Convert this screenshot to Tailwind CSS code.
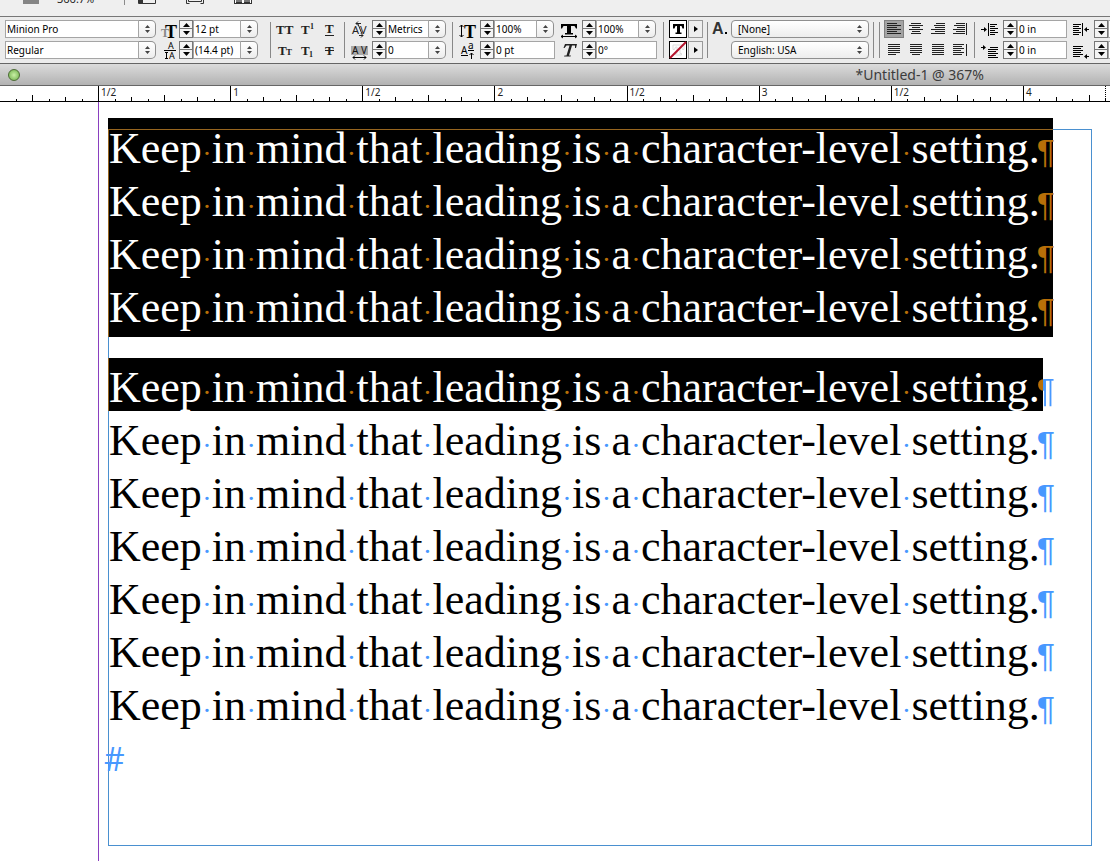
<!DOCTYPE html>
<html lang="en">
<head>
    <meta charset="UTF-8">
    <title>Untitled-1</title>
    <script src="https://cdn.jsdelivr.net/npm/@tailwindcss/browser@4"></script>
</head>
<body class="bg-white text-black font-['Noto_Sans',sans-serif] overflow-x-hidden">

    <!-- Shared glyphs -->
    <svg class="hidden">
        <symbol id="up" viewBox="0 0 7 4"><path d="M0 4L3.5 0L7 4z"/></symbol>
        <symbol id="down" viewBox="0 0 7 4"><path d="M0 0L3.5 4L7 0z"/></symbol>
        <symbol id="updown" viewBox="0 0 5 8"><path d="M0 3L2.5 0L5 3zM0 5L2.5 8L5 5z"/></symbol>
    </svg>

    <div class="flex flex-col min-h-screen">

        <!-- Application bar -->
        <header class="h-4 shrink-0 bg-[#efefef] flex items-start overflow-hidden">
            <span class="ml-[23px] w-4 h-[4px] bg-[#858585]"></span>
            <span class="ml-[18px] w-[38px] h-[3px] flex items-end text-[11px] leading-[9px] text-[#222]">366.7%</span>
            <span class="ml-[29px] w-px h-[5px] bg-[#8a8a8a]"></span>
            <svg class="ml-[13px] w-[19px] h-[5px]" viewBox="0 0 19 5"><path d="M.5 0v3.5h17V0" fill="none" stroke="#333"/><path d="M1 0h4v4H1z" fill="#333"/></svg>
            <svg class="ml-[29px] w-[19px] h-[5px]" viewBox="0 0 19 5"><path d="M.5 0v3.5h3M14.5 3.5h3V0M2.500 0v1.500h13V0" fill="none" stroke="#333"/></svg>
            <svg class="ml-[29px] w-[19px] h-[5px]" viewBox="0 0 19 5"><path d="M0 0h18v4H0z" fill="#333"/><path d="M1 0h1v3H1zM16 0h1v3h-1zM8 0h2v3H8z" fill="#fff"/><path d="M2 0h6v2H2zM10 0h6v2h-6z" fill="#777"/></svg>
        </header>

        <!-- Character controls -->
        <section class="h-[47px] shrink-0 border-t border-[#777] bg-[#ececec] pt-[3px] flex items-start overflow-hidden text-[10px] [&>*]:shrink-0 [&_svg]:overflow-visible">
            <div class="ml-[5px] w-[151px] grid gap-[3px]">
                <div class="flex h-[18px]">
                    <input aria-label="Font" value="Minion Pro" class="w-[134px] h-[18px] px-px bg-white border border-[#a5a5a5]">
                    <button data-drop aria-label="Font list"></button>
                </div>
                <div class="flex h-[18px]">
                    <input aria-label="Style" value="Regular" class="w-[134px] h-[18px] px-px bg-white border border-[#a5a5a5]">
                    <button data-drop aria-label="Style list"></button>
                </div>
            </div>

            <div class="ml-[5px] w-[97px] grid gap-[3px]">
                <div class="flex h-[18px]">
                    <label for="size" class="w-[18px]"><svg class="w-[18px] h-[18px] font-['Liberation_Serif',serif] font-bold" viewBox="0 0 18 18"><text x="0" y="17" font-size="12" fill="#888">T</text><text x="4" y="18" font-size="18">T</text></svg></label>
                    <span data-spin></span>
                    <input id="size" value="12 pt" class="w-12 h-[18px] px-px bg-white border border-[#a5a5a5]">
                    <button data-drop aria-label="Size list"></button>
                </div>
                <div class="flex h-[18px]">
                    <label for="leading" class="w-[18px]"><svg class="w-[18px] h-[18px]" viewBox="0 0 18 18"><text x="7" y="8" font-size="9">A</text><path d="M3 9.500h12M5.500 11v6M4 11.500h3M4 17.500h3" stroke="#000" fill="none"/><text x="8" y="18" font-size="9">A</text></svg></label>
                    <span data-spin></span>
                    <input id="leading" value="(14.4 pt)" class="w-12 h-[18px] px-px bg-white border border-[#a5a5a5]">
                    <button data-drop aria-label="Leading list"></button>
                </div>
            </div>

            <span class="ml-3 mt-[2px] w-px h-9 bg-[#888]"></span>

            <div class="ml-[5px] w-[59px] grid grid-cols-[18px_23px_18px] gap-y-[3px] font-['Liberation_Serif',serif] font-bold text-[#222]">
                <button aria-label="All Caps" class="h-[18px]"><svg class="w-[18px] h-[18px]" viewBox="0 0 18 18"><text x="0" y="14" font-size="13" fill="#222">TT</text></svg></button>
                <button aria-label="Superscript" class="h-[18px] pl-[7px]"><svg class="w-[16px] h-[18px]" viewBox="0 0 16 18"><text x="0" y="14" font-size="13" fill="#222">T</text><text x="9" y="9" font-size="8" fill="#222">1</text></svg></button>
                <button aria-label="Underline" class="h-[18px] pl-[6px]"><svg class="w-[12px] h-[18px]" viewBox="0 0 12 18"><text x="2" y="13" font-size="13" fill="#222">T</text><path d="M2 15.500h9" stroke="#222"/></svg></button>
                <button aria-label="Small Caps" class="h-[18px]"><svg class="w-[18px] h-[18px]" viewBox="0 0 18 18"><text x="2" y="14" font-size="13" fill="#222">T</text><text x="10" y="14" font-size="9" fill="#222">T</text></svg></button>
                <button aria-label="Subscript" class="h-[18px] pl-[7px]"><svg class="w-[16px] h-[18px]" viewBox="0 0 16 18"><text x="0" y="14" font-size="13" fill="#222">T</text><text x="8" y="16" font-size="8" fill="#222">1</text></svg></button>
                <button aria-label="Strikethrough" class="h-[18px] pl-[6px]"><svg class="w-[12px] h-[18px]" viewBox="0 0 12 18"><text x="2" y="14" font-size="13" fill="#222">T</text><path d="M2 9.500h9" stroke="#222"/></svg></button>
            </div>

            <span class="ml-[9px] mt-[2px] w-px h-9 bg-[#888]"></span>

            <div class="ml-[7px] w-[94px] grid gap-[3px]">
                <div class="flex h-[18px]">
                    <label for="kerning" class="w-5"><svg class="w-[18px] h-[18px]" viewBox="0 0 18 18"><text x="0" y="14" font-size="11" fill="#222">A</text><text x="8" y="14" font-size="11" fill="#222">V</text><path d="M6 4l4 10M4 3.500h5M6 1.500l-2 2 2 2M7 15.500h4M9 13.500l2 2-2 2" fill="none" stroke="#222"/></svg></label>
                    <span data-spin></span>
                    <input id="kerning" value="Metrics" class="w-[43px] h-[18px] px-px bg-white border border-[#a5a5a5]">
                    <button data-drop aria-label="Kerning list"></button>
                </div>
                <div class="flex h-[18px]">
                    <label for="tracking" class="w-5"><svg class="w-[18px] h-[18px]" viewBox="0 0 18 18"><path d="M-1 5h17v9H-1z" fill="#aaa"/><text x="0" y="13" font-size="10" fill="#111">A</text><text x="9" y="13" font-size="10" fill="#111">V</text><path d="M1 16.500h13M3 14.500l-2 2 2 2M12 14.500l2 2-2 2" fill="none" stroke="#000"/></svg></label>
                    <span data-spin></span>
                    <input id="tracking" value="0" class="w-[43px] h-[18px] px-px bg-white border border-[#a5a5a5]">
                    <button data-drop aria-label="Tracking list"></button>
                </div>
            </div>

            <span class="ml-[6px] mt-[2px] w-px h-9 bg-[#888]"></span>

            <div class="ml-[7px] w-[95px] grid gap-[3px]">
                <div class="flex h-[18px]">
                    <label for="vscale" class="w-5"><svg class="w-[18px] h-[18px] font-['Liberation_Serif',serif] font-bold" viewBox="0 0 18 18"><path d="M1.500 5v12M-.5 7l2-2 2 2M-.5 15l2 2 2-2" fill="none" stroke="#000"/><text x="4" y="18" font-size="18">T</text></svg></label>
                    <span data-spin></span>
                    <input id="vscale" value="100%" class="w-[43px] h-[18px] px-px bg-white border border-[#a5a5a5]">
                    <button data-drop aria-label="Vertical scale list"></button>
                </div>
                <div class="flex h-[18px]">
                    <label for="baseline" class="w-5"><svg class="w-[18px] h-[18px]" viewBox="0 0 18 18"><text x="1" y="13" font-size="10">A</text><text x="8" y="8" font-size="10">a</text><path d="M1 14.500h7M8 9.500h6M11.500 18v-6M9.500 14l2-2 2 2" stroke="#000" fill="none"/></svg></label>
                    <span data-spin></span>
                    <input id="baseline" value="0 pt" class="w-[61px] h-[18px] px-px bg-white border border-[#a5a5a5]">
                </div>
            </div>

            <div class="ml-[6px] w-[96px] grid gap-[3px]">
                <div class="flex h-[18px]">
                    <label for="hscale" class="w-[21px]"><svg class="w-[18px] h-[18px]" viewBox="0 0 18 18"><path d="M0 4h16v4.500h-1L13.500 6H10v7h2v1.500H4V13h2V6H2.500L1 8.500H0z"/><path d="M0 16.500h16M2 15l-2 1.500 2 1.500M14 15l2 1.500-2 1.500" stroke="#000" fill="none"/></svg></label>
                    <span data-spin></span>
                    <input id="hscale" value="100%" class="w-[43px] h-[18px] px-px bg-white border border-[#a5a5a5]">
                    <button data-drop aria-label="Horizontal scale list"></button>
                </div>
                <div class="flex h-[18px]">
                    <label for="skew" class="w-[21px]"><svg class="w-[18px] h-[18px]" viewBox="0 0 18 18"><path d="M4 3h12l-1 4h-1V4.500h-3L8 14.500h2l-.5 1H3l.5-1h2L8.500 4.500h-3L3.500 7h-1z" fill="#222"/></svg></label>
                    <span data-spin></span>
                    <input id="skew" value="0°" class="w-[61px] h-[18px] px-px bg-white border border-[#a5a5a5]">
                </div>
            </div>

            <span class="ml-[6px] mt-[2px] w-px h-9 bg-[#888]"></span>

            <!-- Fill and stroke -->
            <div class="ml-[5px] w-[34px] grid grid-cols-[18px_15px] gap-x-px gap-y-[3px]">
                <button aria-label="Fill" class="h-[18px] bg-white border border-black"><svg class="w-4 h-4" viewBox="0 0 16 16"><path d="M3 3h11v4.500h-1.500L11.500 5H10v6.500h1.500V13h-6v-1.500H7V5H5.500l-1 2.500H3z"/></svg></button>
                <button aria-label="Fill options" class="h-[18px] bg-[#eee] border border-[#999] flex items-center justify-center"><svg class="w-[4px] h-[6px]" viewBox="0 0 4 6"><path d="M0 0l4 3-4 3z"/></svg></button>
                <button aria-label="Stroke" class="h-[18px] bg-white border border-black"><svg class="w-4 h-4" viewBox="0 0 16 16"><path d="M3 3h11v4.500h-1.500L11.500 5H10v6.500h1.500V13h-6v-1.500H7V5H5.500l-1 2.500H3z" fill="none" stroke="#ddd"/><path d="M0 16L16 0" stroke="#b5122b" stroke-width="2"/></svg></button>
                <button aria-label="Stroke options" class="h-[18px] bg-[#eee] border border-[#999] flex items-center justify-center"><svg class="w-[4px] h-[6px]" viewBox="0 0 4 6"><path d="M0 0l4 3-4 3z"/></svg></button>
            </div>

            <span class="ml-1 mt-[2px] w-px h-9 bg-[#888]"></span>

            <!-- Character style and language -->
            <div class="ml-[3px] w-[158px] grid grid-cols-[20px_138px] gap-y-[3px]">
                <label for="charstyle"><svg class="w-[18px] h-[18px] font-['Liberation_Sans',sans-serif] font-bold" viewBox="0 0 18 18"><text x="1" y="14" font-size="16" fill="#333">A</text><path d="M14 12h2v2h-2z"/></svg></label>
                <div class="relative h-[18px]">
                    <select id="charstyle" class="appearance-none w-full h-[18px] pl-[6px] rounded-[4px] border border-[#8f8f8f] bg-linear-to-b from-white to-[#ededed]"><option>[None]</option></select>
                    <svg class="absolute right-[7px] top-[5px] w-[5px] h-2 fill-[#444] pointer-events-none"><use href="#updown"/></svg>
                </div>
                <div class="relative col-start-2 h-[18px]">
                    <select aria-label="Language" class="appearance-none w-full h-[18px] pl-[6px] rounded-[4px] border border-[#8f8f8f] bg-linear-to-b from-white to-[#ededed]"><option>English: USA</option></select>
                    <svg class="absolute right-[7px] top-[5px] w-[5px] h-2 fill-[#444] pointer-events-none"><use href="#updown"/></svg>
                </div>
            </div>

            <span class="ml-1 mt-[2px] w-px h-9 bg-[#888]"></span>
            <span class="ml-[5px] mt-[2px] w-px h-9 bg-[#888]"></span>

            <!-- Paragraph alignment -->
            <div class="ml-1 w-[86px] grid grid-cols-[20px_20px_20px_20px] gap-x-[2px] gap-y-[3px] [&_button]:h-[18px] [&_button]:flex [&_button]:items-center [&_button]:justify-center [&_path]:stroke-[#222]">
                <button aria-label="Align left" class="bg-[#a3a3a3] border border-[#808080]"><svg class="w-[14px] h-3" viewBox="0 0 14 12"><path d="M0 .5h10M0 2.500h14M0 4.500h10M0 6.500h14M0 8.500h10M0 10.500h14"/></svg></button>
                <button aria-label="Align center"><svg class="w-[14px] h-3" viewBox="0 0 14 12"><path d="M2 .5h10M0 2.500h14M3 4.500h8M0 6.500h14M3 8.500h8M2 10.500h10"/></svg></button>
                <button aria-label="Align right"><svg class="w-[14px] h-3" viewBox="0 0 14 12"><path d="M5 .5h9M3 2.500h11M4 4.500h10M0 6.500h14M4 8.500h10M0 10.500h14"/></svg></button>
                <button aria-label="Align toward spine"><svg class="w-[14px] h-3" viewBox="0 0 14 12"><path d="M3 .5h9M1 2.500h11M4 4.500h8M0 6.500h12M3 8.500h9M0 10.500h12M13.500 0v12"/></svg></button>
                <button aria-label="Justify last left"><svg class="w-3 h-3" viewBox="0 0 12 12"><path d="M0 .5h12M0 2.500h12M0 4.500h12M0 6.500h12M0 8.500h12M0 10.500h8"/></svg></button>
                <button aria-label="Justify last center"><svg class="w-3 h-3" viewBox="0 0 12 12"><path d="M0 .5h12M0 2.500h12M0 4.500h12M0 6.500h12M0 8.500h12M2 10.500h8"/></svg></button>
                <button aria-label="Justify all"><svg class="w-3 h-3" viewBox="0 0 12 12"><path d="M0 .5h12M0 2.500h12M0 4.500h12M0 6.500h12M0 8.500h12M0 10.500h12"/></svg></button>
                <button aria-label="Align away from spine"><svg class="w-[14px] h-3" viewBox="0 0 14 12"><path d="M0 .5h11M0 2.500h9M0 4.500h11M0 6.500h8M0 8.500h11M0 10.500h9M13.500 0v12"/></svg></button>
            </div>

            <span class="ml-1 mt-[2px] w-px h-9 bg-[#888]"></span>

            <!-- Indents -->
            <div class="ml-[7px] w-[85px] grid gap-[3px]">
                <div class="flex h-[18px]">
                    <label for="indleft" class="w-[21px]"><svg class="w-[18px] h-[18px]" viewBox="0 0 18 18"><path d="M-1 9.500h4M6.500 3v13M8 4.500h7M8 6.500h5M8 8.500h8M8 10.500h5M8 12.500h8M8 14.500h5" stroke="#000"/><path d="M2 7l3 2.500L2 12z"/></svg></label>
                    <span data-spin></span>
                    <input id="indleft" value="0 in" class="w-[50px] h-[18px] px-px bg-white border border-[#a5a5a5]">
                </div>
                <div class="flex h-[18px]">
                    <label for="indfirst" class="w-[21px]"><svg class="w-[18px] h-[18px]" viewBox="0 0 18 18"><path d="M-1 6.500h3M8 6.500h8M6 8.500h10M6 10.500h8M6 12.500h10M6 14.500h8M6 16.500h10" stroke="#000"/><path d="M1 4l3 2.500L1 9z"/></svg></label>
                    <span data-spin></span>
                    <input id="indfirst" value="0 in" class="w-[50px] h-[18px] px-px bg-white border border-[#a5a5a5]">
                </div>
            </div>
            <div class="ml-[5px] w-[88px] grid gap-[3px]">
                <div class="flex h-[18px]">
                    <label for="indright" class="w-[22px]"><svg class="w-[18px] h-[18px]" viewBox="0 0 18 18"><path d="M1 4.500h8M1 6.500h6M1 8.500h8M1 10.500h6M1 12.500h8M1 14.500h6M10.500 3v13M14 9.500h3" stroke="#000"/><path d="M15 7l-3 2.500 3 2.500z"/></svg></label>
                    <span data-spin></span>
                    <input id="indright" value="" aria-label="Right indent" class="w-[50px] h-[18px] px-px bg-white border border-[#a5a5a5]">
                </div>
                <div class="flex h-[18px]">
                    <label for="indlast" class="w-[22px]"><svg class="w-[18px] h-[18px]" viewBox="0 0 18 18"><path d="M1 5.500h10M1 7.500h8M1 9.500h10M1 11.500h8M1 13.500h10M1 15.500h7M14 15.500h3" stroke="#000"/><path d="M15 13l-3 2.500 3 2.500z"/></svg></label>
                    <span data-spin></span>
                    <input id="indlast" value="" aria-label="Last line indent" class="w-[50px] h-[18px] px-px bg-white border border-[#a5a5a5]">
                </div>
            </div>
        </section>

        <!-- Window title -->
        <div class="h-[23px] shrink-0 flex items-center border-t border-[#666] border-b bg-linear-to-b from-[#dcdcdc] to-[#b2b2b2]">
            <button aria-label="Zoom window" class="ml-2 size-3 rounded-full border border-[#4c6b35] bg-radial from-[#c9efa5] to-[#6cae45]"></button>
            <h1 class="ml-auto mr-[126px] text-[14px] leading-5 text-[#3c3c3c]">*Untitled-1 @ 367%</h1>
        </div>

        <!-- Ruler -->
        <div class="relative h-4 shrink-0 overflow-hidden border-b border-black bg-white">
            <div id="ruler" class="flex w-[1189px] -ml-[34px] h-full"></div>
            <span class="absolute left-[1105px] top-0 h-full border-l border-dotted border-black"></span>
        </div>

        <!-- Pasteboard -->
        <main class="relative grow bg-white pl-[98px]">
            <!-- Text frame edge -->
            <div class="absolute left-[108px] right-[18px] top-[27px] bottom-[15px] border border-[#4a90d0] pointer-events-none"></div>
            <div class="border-l border-[#8a3fc0] min-h-[759px] pt-4 pl-[9px] pr-[18px]">
                <div id="story" class="font-['Liberation_Serif',serif] text-[44px]"></div>
            </div>
        </main>
    </div>

    <script>
        // Stepper arrows and drop-down buttons
        document.querySelectorAll('[data-spin]').forEach(el => {
            el.className = 'w-[14px] h-[18px] shrink-0 grid grid-rows-2 border border-[#777] bg-[#f4f4f4]';
            el.innerHTML = `
                <button aria-label="Increase" class="flex items-center justify-center border-b border-[#777]"><svg class="w-[7px] h-1"><use href="#up"/></svg></button>
                <button aria-label="Decrease" class="flex items-center justify-center"><svg class="w-[7px] h-1"><use href="#down"/></svg></button>`;
        });
        document.querySelectorAll('[data-drop]').forEach(el => {
            el.className = 'w-[17px] h-[18px] shrink-0 flex items-center justify-center rounded-r-[5px] border border-l-0 border-[#8f8f8f] bg-linear-to-b from-white to-[#ededed]';
            el.innerHTML = '<svg class="w-[5px] h-2 fill-[#444]"><use href="#updown"/></svg>';
        });

        // Ruler: one cell per half inch, eight ticks each
        const ticks = ['h-4', 'h-[2px]', 'h-1', 'h-[2px]', 'h-[6px]', 'h-[2px]', 'h-1', 'h-[2px]'];
        document.getElementById('ruler').innerHTML = ['', '1/2', '1', '1/2', '2', '1/2', '3', '1/2', '4'].map(n => `
            <div class="relative flex-1 flex items-end">
                ${ticks.map(h => `<span class="flex-1 border-l border-black ${h}"></span>`).join('')}
                <span class="absolute left-[3px] top-0 text-[10px] leading-3 text-[#222]">${n}</span>
            </div>`).join('');

        // Story text with hidden characters shown
        const words = 'Keep in mind that leading is a character-level setting.'.split(' ');
        const line = (dot, mark) => `
            <p class="relative flex items-baseline h-[53px] pl-px leading-[59px] whitespace-nowrap">
                ${words.map(w => `<span class="shrink-0">${w}</span>`).join(`<span class="w-[10px] shrink-0 text-center text-[28px] ${dot}">·</span>`)}
                <span class="-ml-[3px] shrink-0 font-['Liberation_Sans',sans-serif] text-[34px] leading-[44px] ${mark}">¶</span>
            </p>`;
        const gold = 'text-[#b86f08]';
        const blue = 'text-[#4798ff]';
        const split = 'text-transparent bg-clip-text bg-[linear-gradient(90deg,#b86f08_6px,#4798ff_6px)]';
        document.getElementById('story').innerHTML = `
            <div class="relative w-[945px] bg-black text-white pt-px pb-[6px]">
                <div class="absolute inset-x-0 top-[11px] bottom-0 border-t border-l border-[#97651f]"></div>
                ${line(gold, gold).repeat(4)}
            </div>
            <div class="relative w-[935px] mt-[21px] bg-black text-white">
                <div class="absolute inset-y-0 left-0 border-l border-[#97651f]"></div>
                ${line(gold, split)}
            </div>
            ${line(blue, blue).repeat(6)}
            <p class="relative -ml-[4px] h-[53px] leading-[59px] font-['Open_Sans',sans-serif] text-[32px] text-[#4798ff]">#</p>`;
    </script>
</body>
</html>
